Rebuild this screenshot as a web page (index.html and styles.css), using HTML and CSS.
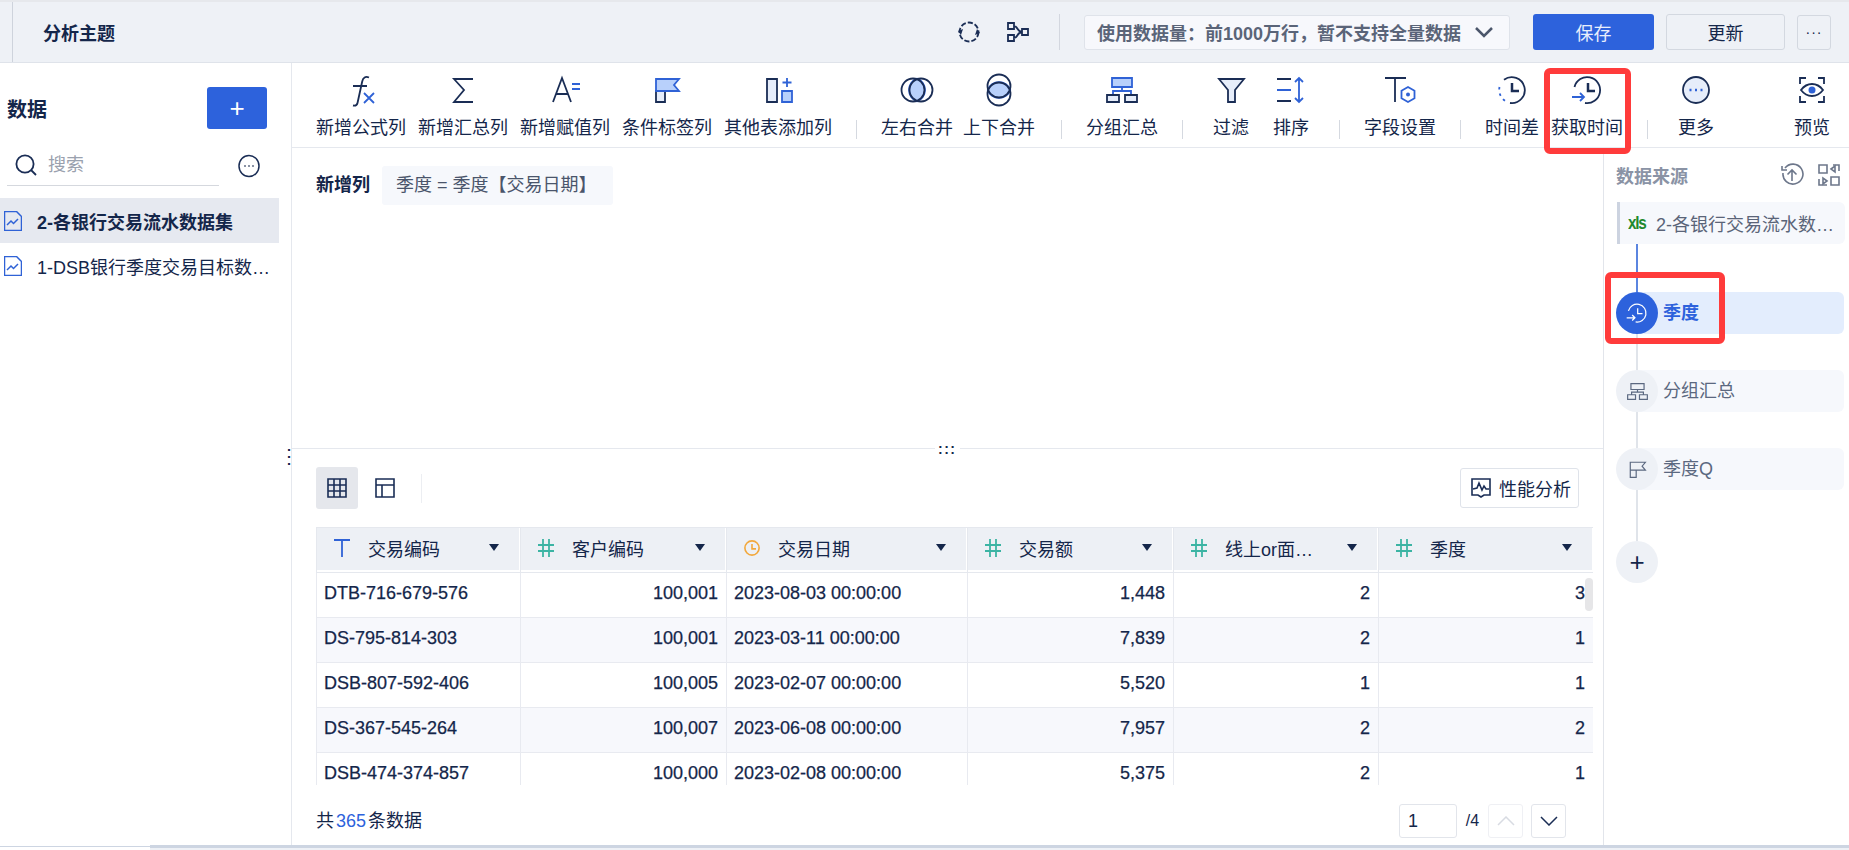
FILE: index.html
```html
<!DOCTYPE html>
<html lang="zh-CN">
<head>
<meta charset="utf-8">
<title>分析主题</title>
<link rel="stylesheet" href="styles.css">
</head>
<body>
<div class="app">
  <header class="topbar">
    <h1 class="title">分析主题</h1>
    <svg class="top-icon" width="24" height="24" viewBox="0 0 24 24"><circle class="nv ring" cx="12" cy="12" r="9.500"/><path class="nvf" d="M20 9l3 4-5 2zM4 15l-3-4 5-2z"/></svg>
    <svg class="top-icon lineage" width="24" height="24" viewBox="0 0 24 24"><path class="nv" d="M3 3h6v6H3zM3 15h6v6H3zM17 9h6v6h-6zM9 6c4 0 3 6 8 6M9 18c4 0 3-6 8-6"/></svg>
    <span class="top-sep"></span>
    <div class="limit">
      <span>使用数据量：前1000万行，暂不支持全量数据</span>
      <svg width="20" height="12" viewBox="0 0 20 12"><path class="chev" d="M2 2l8 8 8-8"/></svg>
    </div>
    <button class="btn btn-save">保存</button>
    <button class="btn btn-update">更新</button>
    <button class="btn btn-more">···</button>
  </header>

  <div class="main">
    <aside class="sidebar">
      <div class="side-head">
        <h2 class="side-title">数据</h2>
        <button class="add-btn">+</button>
      </div>
      <div class="side-search">
        <div class="search-box">
          <svg width="24" height="24" viewBox="0 0 24 24"><circle class="nv" cx="11" cy="11" r="8.600"/><path class="nv" d="M17 17l5 5"/></svg>
          <span class="search-text">搜索</span>
        </div>
        <svg class="search-more" width="22" height="24" viewBox="0 0 22 24"><ellipse class="nv thin" cx="11" cy="12" rx="10" ry="10.500"/><path class="dots" d="M6.500 12h1M10.500 12h1M14.500 12h1"/></svg>
      </div>
      <ul class="ds-list">
        <li class="ds-item ds-active">
          <svg width="18" height="20" viewBox="0 0 18 20"><path class="bl thin" d="M.5.500h12l5 5v14H.5z"/><path class="bl thin" d="M3 14l4-4 2.500 2.500L14 8"/></svg>
          <span class="ds-name">2-各银行交易流水数据集</span>
        </li>
        <li class="ds-item">
          <svg width="18" height="20" viewBox="0 0 18 20"><path class="bl thin" d="M.5.500h12l5 5v14H.5z"/><path class="bl thin" d="M3 14l4-4 2.500 2.500L14 8"/></svg>
          <span class="ds-name">1-DSB银行季度交易目标数…</span>
        </li>
      </ul>
      <span class="side-handle">⋮</span>
    </aside>

    <div class="content">
      <nav class="toolbar">
        <div class="tool"><svg viewBox="0 0 32 32"><path class="nv" d="M24 3.500c-3.500-1.500-6 0-6.800 4L12.500 29c-.6 2.500-2 3-4.500 2.500M8 12h14"/><path class="bl" d="M19 19l10 10M29 19L19 29"/></svg><span>新增公式列</span></div>
        <div class="tool"><svg viewBox="0 0 32 32"><path class="nv" d="M26 5H7l10 11L7 28h19"/></svg><span>新增汇总列</span></div>
        <div class="tool"><svg viewBox="0 0 32 32"><path class="nv" d="M4 28l9-24 9 24M7 20h12"/><path class="bl" d="M23 10h8M23 15h8"/></svg><span>新增赋值列</span></div>
        <div class="tool"><svg viewBox="0 0 32 32"><path class="pale nv" d="M5 17h9v11H5z"/><path class="mid bl" d="M5 5h23l-5 6 5 6H5z"/></svg><span>条件标签列</span></div>
        <div class="tool"><svg viewBox="0 0 32 32"><path class="pale nv" d="M5 5h10v23H5z"/><path class="bl" d="M25 4v9M20.500 8.500h9"/><path class="mid bl" d="M20 17h10v11H20z"/></svg><span>其他表添加列</span></div>
        <span class="tool-sep"></span>
        <div class="tool"><svg viewBox="0 0 32 32"><path class="mid bl" d="M16 4.700a12 12 0 0 1 0 22.600 12 12 0 0 1 0-22.600z"/><circle class="nv" cx="12" cy="16" r="11.500"/><circle class="nv" cx="20" cy="16" r="11.500"/></svg><span>左右合并</span></div>
        <div class="tool tool-nudge"><svg viewBox="0 0 32 32"><path class="mid bl" d="M4.700 16a12 12 0 0 1 22.600 0 12 12 0 0 1-22.600 0z"/><circle class="nv" cx="16" cy="12" r="11.500"/><circle class="nv" cx="16" cy="20" r="11.500"/></svg><span>上下合并</span></div>
        <span class="tool-sep"></span>
        <div class="tool"><svg viewBox="0 0 32 32"><path class="mid bl" d="M6 4h20v9H6z"/><path class="bl" d="M16 13v4M7 21v-4h18v4"/><path class="pale nv" d="M1 21h12v7H1zM19 21h12v7H19z"/></svg><span>分组汇总</span></div>
        <span class="tool-sep"></span>
        <div class="tool tool-short"><svg viewBox="0 0 32 32"><path class="pale nv" d="M4 5h25L20 16v12h-7V16z"/></svg><span>过滤</span></div>
        <div class="tool tool-short"><svg viewBox="0 0 32 32"><path class="nv" d="M2 5h14M2 27h14"/><path class="bl" d="M2 16h14M24 4v24M20 8l4-4 4 4M20 24l4 4 4-4"/></svg><span>排序</span></div>
        <span class="tool-sep"></span>
        <div class="tool"><svg viewBox="0 0 32 32"><path class="nv" d="M1 4h21M11 4v24"/><path class="bl" d="M24 13l6.500 3.700v7.600L24 28l-6.500-3.700v-7.600z"/><circle class="blf" cx="24" cy="20.500" r="2"/></svg><span>字段设置</span></div>
        <span class="tool-sep"></span>
        <div class="tool"><svg viewBox="0 0 32 32"><path class="nv" d="M8 5.700A13 13 0 1 1 14 29"/><path class="bl dotted" d="M3.500 13a13 13 0 0 0 7 14.500"/><path class="nv thick" d="M16 9v8h7"/></svg><span>时间差</span></div>
        <div class="tool"><svg viewBox="0 0 32 32"><path class="nv" d="M3.500 13A13 13 0 1 1 14 29"/><path class="nv thick" d="M17 9v8h7"/><path class="bl" d="M1 23h12M9 19l4 4-4 4"/></svg><span>获取时间</span></div>
        <span class="tool-sep"></span>
        <div class="tool tool-short"><svg viewBox="0 0 32 32"><circle class="pale nv" cx="16" cy="16" r="13"/><path class="dots-bl" d="M9.500 16h2M15 16h2M20.500 16h2"/></svg><span>更多</span></div>
        <div class="tool tool-short tool-end"><svg viewBox="0 0 32 32"><path class="nv" d="M4 10V4h6M22 4h6v6M28 22v6h-6M10 28H4v-6"/><path class="nv" d="M5 16c6-8 16-8 22 0-6 8-16 8-22 0z"/><circle class="blf" cx="16" cy="16" r="3.500"/></svg><span>预览</span></div>
      </nav>

      <div class="work">
        <section class="center">
          <div class="expr">
            <strong class="expr-label">新增列</strong>
            <span class="expr-chip">季度 = 季度【交易日期】</span>
            <span class="split-handle">:::</span>
          </div>

          <div class="preview">
            <div class="view-row">
              <button class="view-btn view-active"><svg width="20" height="20" viewBox="0 0 20 20"><path class="nv thin2" d="M1 1h18v18H1zM7 1v18M13 1v18M1 7h18M1 13h18"/></svg></button>
              <button class="view-btn"><svg width="20" height="20" viewBox="0 0 20 20"><path class="nv thin2" d="M1 1h18v18H1zM1 7h18M7 7v12"/></svg></button>
              <span class="view-sep"></span>
              <button class="perf-btn"><svg width="20" height="20" viewBox="0 0 20 20"><path class="nv thin2" d="M7 17H1V1h18v16h-6l-3 2z"/><path class="nv thin2" d="M2 11l4-1 2-5 3 7 2-4 2 3h3"/></svg><span>性能分析</span></button>
            </div>

            <div class="table-wrap">
              <table class="grid">
                <colgroup><col class="c1"><col class="c2"><col class="c3"><col class="c4"><col class="c5"><col class="c6"></colgroup>
                <thead>
                  <tr>
                    <th><div class="th-in"><svg class="ty" viewBox="0 0 16 18"><path class="bl" d="M0 1h16M8 1v17"/></svg><span class="th-name">交易编码</span><i class="caret"></i></div></th>
                    <th><div class="th-in"><svg class="ty" viewBox="0 0 16 18"><path class="teal" d="M0 6h16M0 12h16M5 0v18M11 0v18"/></svg><span class="th-name">客户编码</span><i class="caret"></i></div></th>
                    <th><div class="th-in"><svg class="ty" viewBox="0 0 18 18"><circle class="orange" cx="9" cy="9" r="8"/><path class="orange" d="M9 4.500V10h4.500"/></svg><span class="th-name">交易日期</span><i class="caret"></i></div></th>
                    <th><div class="th-in"><svg class="ty" viewBox="0 0 16 18"><path class="teal" d="M0 6h16M0 12h16M5 0v18M11 0v18"/></svg><span class="th-name">交易额</span><i class="caret"></i></div></th>
                    <th><div class="th-in"><svg class="ty" viewBox="0 0 16 18"><path class="teal" d="M0 6h16M0 12h16M5 0v18M11 0v18"/></svg><span class="th-name">线上or面…</span><i class="caret"></i></div></th>
                    <th><div class="th-in"><svg class="ty" viewBox="0 0 16 18"><path class="teal" d="M0 6h16M0 12h16M5 0v18M11 0v18"/></svg><span class="th-name">季度</span><i class="caret"></i></div></th>
                  </tr>
                </thead>
                <tbody>
                  <tr><td>DTB-716-679-576</td><td class="num">100,001</td><td>2023-08-03 00:00:00</td><td class="num">1,448</td><td class="num">2</td><td class="num">3</td></tr>
                  <tr><td>DS-795-814-303</td><td class="num">100,001</td><td>2023-03-11 00:00:00</td><td class="num">7,839</td><td class="num">2</td><td class="num">1</td></tr>
                  <tr><td>DSB-807-592-406</td><td class="num">100,005</td><td>2023-02-07 00:00:00</td><td class="num">5,520</td><td class="num">1</td><td class="num">1</td></tr>
                  <tr><td>DS-367-545-264</td><td class="num">100,007</td><td>2023-06-08 00:00:00</td><td class="num">7,957</td><td class="num">2</td><td class="num">2</td></tr>
                  <tr><td>DSB-474-374-857</td><td class="num">100,000</td><td>2023-02-08 00:00:00</td><td class="num">5,375</td><td class="num">2</td><td class="num">1</td></tr>
                </tbody>
              </table>
              <span class="scroll-thumb"></span>
            </div>

            <div class="foot">
              <span class="count">共<b>365</b>条数据</span>
              <div class="pager">
                <span class="page-input">1</span>
                <span class="page-total">/4</span>
                <button class="page-btn page-off"><svg width="18" height="10" viewBox="0 0 18 10"><path class="off" d="M1 9l8-8 8 8"/></svg></button>
                <button class="page-btn"><svg width="18" height="10" viewBox="0 0 18 10"><path class="nv thin" d="M1 1l8 8 8-8"/></svg></button>
              </div>
            </div>
          </div>
        </section>

        <aside class="flow">
          <div class="flow-head">
            <span>数据来源</span>
            <div class="flow-tools">
              <svg width="24" height="24" viewBox="0 0 24 24"><path class="gr" d="M5 5a10 10 0 1 1-2 5"/><path class="gr" d="M2 3v4h5M12 18V7M7.500 11.500L12 7l4.500 4.500"/></svg>
              <svg width="24" height="24" viewBox="0 0 24 24"><path class="gr" d="M2 2h8v8H2zM14 14h8v8h-8zM2 16v6h8M22 8V2h-6"/><path class="gr" d="M14 6l4-3v6zM10 18l-4-3v6z"/></svg>
            </div>
          </div>
          <div class="source">
            <span class="xls">xls</span>
            <span class="source-name">2-各银行交易流水数…</span>
          </div>
          <span class="link link-on link-a"></span>
          <div class="node node-on">
            <span class="dot"><svg width="22" height="22" viewBox="0 0 32 32"><path class="wh" d="M3.500 13A13 13 0 1 1 14 29M17 9v8h7M1 23h12M9 19l4 4-4 4"/></svg></span>
            <span class="node-label">季度</span>
          </div>
          <span class="link link-b"></span>
          <div class="node">
            <span class="dot"><svg width="21" height="21" viewBox="0 0 32 32"><path class="sl" d="M6 4h20v9H6zM16 13v4M7 21v-4h18v4M1 21h12v7H1zM19 21h12v7H19z"/></svg></span>
            <span class="node-label">分组汇总</span>
          </div>
          <span class="link link-b"></span>
          <div class="node">
            <span class="dot"><svg width="21" height="21" viewBox="0 0 32 32"><path class="sl" d="M5 17h9v11H5zM5 5h23l-5 6 5 6H5z"/></svg></span>
            <span class="node-label">季度Q</span>
          </div>
          <span class="link link-c"></span>
          <div class="node"><span class="dot dot-add">+</span></div>
        </aside>
      </div>
    </div>
  </div>

  <footer class="strip"><span class="strip-left"></span><span class="strip-right"></span></footer>

  <span class="mark mark-tool"></span>
  <span class="mark mark-node"></span>
</div>
</body>
</html>
```

FILE: styles.css
```css
* { box-sizing: border-box; }
html, body { margin: 0; height: 100%; background: #fff; }
body {
  overflow: hidden;
  font-family: "Liberation Sans", "Noto Sans CJK SC", sans-serif;
  font-size: 18px;
  color: #14264a;
}
button { font: inherit; color: inherit; cursor: pointer; }
h1, h2, ul { margin: 0; padding: 0; }
li { list-style: none; }

.app { position: relative; width: 1849px; height: 850px; display: flex; flex-direction: column; }

/* svg strokes */
svg path, svg circle, svg ellipse { fill: none; stroke-width: 1.800; }
.nv { stroke: #1a2d55; }
svg .nvf { fill: #1a2d55; stroke: none; }
.bl { stroke: #2f62d6; }
svg .blf { fill: #2f62d6; stroke: none; }
svg .pale { fill: #e6edfa; }
svg .mid { fill: #b8d0fb; }
svg .thin { stroke-width: 1.500; }
svg .thin2 { stroke-width: 1.600; }
svg .thick { stroke-width: 2.500; }
.dotted { stroke-dasharray: 2.500 4; }
.ring { stroke-dasharray: 5.200 2; }
svg .dots { stroke: #14264a; stroke-width: 2; }
svg .dots-bl { stroke: #2f62d6; stroke-width: 2.500; }
svg .chev { stroke: #4b566b; stroke-width: 2.500; }
.teal { stroke: #3cb4a4; }
.orange { stroke: #f2a83c; }
svg .gr { stroke: #6d778b; stroke-width: 1.600; }
.wh { stroke: #fff; }
.sl { stroke: #5b6880; }
svg .off { stroke: #d8dbe2; stroke-width: 1.500; }

/* top bar */
.topbar {
  height: 63px;
  flex: none;
  display: flex;
  align-items: center;
  background: #eef1f6;
  border-top: 2px solid #e6e8ec;
  border-bottom: 1px solid #dfe3ea;
  padding-right: 18px;
  position: relative;
}
.topbar::before { content: ""; position: absolute; left: 12px; top: 0; bottom: 0; width: 1px; background: #ced3dc; }
.title { font-size: 18px; font-weight: 700; margin-left: 43px; margin-right: auto; }
.top-icon { flex: none; }
.lineage { margin-left: 24px; }
.top-sep { width: 1px; height: 36px; background: #d3d7df; margin: 0 24px 0 30px; }
.limit {
  width: 426px;
  height: 35px;
  display: flex;
  align-items: center;
  justify-content: space-between;
  padding: 0 15px 0 12px;
  background: #f7f8fc;
  border: 1px solid #dfe3ea;
  border-radius: 3px;
  color: #5a6478;
  font-weight: 700;
}
.btn { height: 36px; border-radius: 3px; margin-left: 12px; padding: 0; }
.btn-save { width: 121px; margin-left: 23px; background: #2d62dc; border: 0; color: #e9effc; }
.btn-update { width: 119px; background: #eef1f6; border: 1px solid #d3d8e0; }
.btn-more { width: 34px; height: 35px; background: #eef1f6; border: 1px solid #d3d8e0; font-size: 14px; letter-spacing: 1px; }

.main { height: 782px; flex: none; display: flex; }

/* sidebar */
.sidebar { width: 292px; flex: none; border-right: 1px solid #e5e8ee; position: relative; }
.side-head { display: flex; justify-content: space-between; align-items: center; padding: 24px 24px 0 7px; }
.side-title { font-size: 20px; font-weight: 700; }
.add-btn { width: 60px; height: 42px; border: 0; border-radius: 3px; background: #2d62dc; color: #fff; font-size: 26px; line-height: 42px; padding: 0; font-weight: 300; }
.side-search { display: flex; align-items: center; margin-top: 24px; height: 33px; padding-left: 7px; }
.search-box { width: 212px; height: 33px; display: flex; align-items: flex-start; gap: 10px; padding-left: 7px; border-bottom: 1px solid #d5d8de; }
.search-text { color: #9aa1ae; line-height: 24px; }
.search-more { margin-left: 19px; margin-top: -8px; }
.ds-list { margin-top: 12px; width: 279px; }
.ds-item { height: 45px; display: flex; align-items: center; gap: 15px; padding: 0 0 0 4px; }
.ds-item svg { flex: none; }
.ds-active { background: #e6e9f0; font-weight: 700; }
.ds-name { white-space: nowrap; }
.side-handle { position: absolute; right: 0; top: 379px; width: 12px; text-align: center; font-size: 20px; line-height: 28px; color: #14264a; }

/* toolbar */
.content { flex: 1; min-width: 0; display: flex; flex-direction: column; }
.toolbar {
  height: 85px;
  flex: none;
  display: flex;
  gap: 12px;
  padding: 11px 13px 0 24px;
  border-bottom: 1px solid #e5e8ee;
}
.tool { flex: none; display: flex; flex-direction: column; align-items: center; }
.tool svg { width: 32px; height: 32px; overflow: visible; }
.tool span { margin-top: 10px; line-height: 24px; white-space: nowrap; }
.tool-short { padding: 0 6px; }
.tool-end { margin-left: auto; }
.tool-nudge { transform: translateX(-2px); }
.tool-sep { width: 1px; height: 19px; background: #d5d9e0; margin: 46px 12px 0; flex: none; }

/* work area */
.work { flex: 1; min-height: 0; display: flex; }
.center { width: 1312px; flex: none; border-right: 1px solid #e2e5eb; display: flex; flex-direction: column; }
.expr { height: 301px; flex: none; padding: 18px 0 0 24px; display: flex; align-items: flex-start; gap: 12px; border-bottom: 1px solid #e5e8ee; position: relative; }
.expr-label { line-height: 39px; font-weight: 700; }
.expr-chip { height: 39px; line-height: 39px; width: 231px; padding-left: 14px; background: #f6f8fc; color: #4a556b; border-radius: 3px; white-space: nowrap; }
.split-handle { position: absolute; left: 643px; bottom: -8px; font-size: 14px; line-height: 14px; letter-spacing: 1.500px; background: #fff; padding: 0 3px; color: #14264a; font-weight: 700; }

.preview { flex: 1; min-height: 0; padding: 18px 10px 0 24px; display: flex; flex-direction: column; }
.view-row { height: 42px; flex: none; display: flex; align-items: center; gap: 6px; }
.view-btn { width: 42px; height: 42px; border: 0; background: transparent; border-radius: 3px; padding: 0; display: flex; align-items: center; justify-content: center; }
.view-active { background: #e5e7ec; }
.view-sep { width: 1px; height: 29px; background: #eceef2; margin-left: 9px; }
.perf-btn { margin-left: auto; margin-right: 14px; width: 119px; height: 40px; background: #fff; border: 1px solid #dfe3ea; border-radius: 3px; display: flex; align-items: center; gap: 8px; padding: 0 0 0 10px; }

.table-wrap { margin-top: 18px; height: 258px; flex: none; overflow: hidden; position: relative; }
.grid { width: 1277px; table-layout: fixed; border-collapse: collapse; }
.c1 { width: 204px; } .c2 { width: 206px; } .c3 { width: 241px; } .c4 { width: 206px; } .c5 { width: 205px; } .c6 { width: 215px; }
.grid th { height: 45px; padding: 0; background: #edf0f5; border: 1px solid #e5e8ee; font-weight: 400; box-shadow: inset -1px -2px 0 #fff; }
.grid td { height: 45px; padding: 0 8px 3px 7px; border: 1px solid #e8eaf0; white-space: nowrap; -webkit-text-stroke: .25px #14264a; }
.grid tbody tr:nth-child(even) td { background: #f7f8fc; }
.num { text-align: right; }
.th-in { display: flex; align-items: center; padding: 0 21px 5px 17px; gap: 18px; text-align: left; }
.ty { width: 16px; height: 18px; flex: none; overflow: visible; }
.th-name { flex: 1; white-space: nowrap; }
.caret { width: 0; height: 0; border-left: 5.500px solid transparent; border-right: 5.500px solid transparent; border-top: 7px solid #14264a; flex: none; }
.scroll-thumb { position: absolute; left: 1269px; top: 51px; width: 8px; height: 33px; background: #e6e6e8; border-radius: 4px; }

.foot { flex: 1; display: flex; justify-content: space-between; align-items: flex-start; padding: 19px 27px 0 0; }
.count { line-height: 34px; }
.count b { color: #2d62dc; font-weight: 400; margin: 0 2px; }
.pager { display: flex; align-items: center; height: 34px; }
.page-input { width: 58px; height: 34px; border: 1px solid #e2e5eb; border-radius: 3px; line-height: 32px; padding-left: 8px; }
.page-total { width: 31px; text-align: center; font-size: 16px; }
.page-btn { width: 35px; height: 34px; margin-right: 8px; background: #fff; border: 1px solid #e2e5eb; border-radius: 3px; padding: 0; display: flex; align-items: center; justify-content: center; }
.page-btn:last-child { margin-right: 0; }
.page-off { border-color: #eff0f4; }

/* data flow */
.flow { flex: 1; padding: 12px 4px 0 12px; display: flex; flex-direction: column; align-items: flex-start; }
.flow-head { width: 100%; height: 30px; display: flex; align-items: center; justify-content: space-between; margin-bottom: 12px; color: #8a93a5; font-weight: 700; padding-right: 4px; }
.flow-tools { display: flex; gap: 13px; }
.source { width: 228px; margin-left: 1px; height: 42px; flex: none; display: flex; align-items: center; gap: 6px; padding: 0 0 0 8px; background: #f6f8fc; border-left: 3px solid #ccd3e0; border-radius: 0 6px 6px 0; color: #5a6478; }
.xls { width: 22px; flex: none; color: #1f8a2e; font-weight: 700; letter-spacing: -1.500px; transform: scaleX(.85); transform-origin: left center; white-space: nowrap; }
.source-name { white-space: nowrap; }
.link { display: block; width: 2px; margin-left: 20px; background: #e0e4ea; flex: none; }
.link-on { background: #5b85e0; }
.link-a { height: 48px; }
.link-b { height: 36px; }
.link-c { height: 51px; }
.node { display: flex; align-items: center; width: 228px; height: 42px; flex: none; }
.dot { position: relative; z-index: 1; width: 42px; height: 42px; flex: none; border-radius: 50%; background: #eef1f6; display: flex; align-items: center; justify-content: center; }
.dot-add { font-size: 26px; font-weight: 300; }
.node-label { flex: 1; height: 42px; line-height: 42px; margin-left: -21px; padding-left: 26px; background: #f6f8fc; color: #5b6880; border-radius: 0 6px 6px 0; }
.node-on .dot { background: #2d62dc; }
.node-on .node-label { background: #e3edfd; color: #2d62dc; font-weight: 700; }

/* bottom strip */
.strip { flex: 1; display: flex; }
.strip-left { width: 150px; border-top: 1px solid #cdd5e2; margin-top: 1px; }
.strip-right { flex: 1; background: #eef1f6; border-top: 3px solid #cdd5e2; }

/* annotations */
.mark { position: absolute; border: 6px solid #ff3b3b; border-radius: 6px; pointer-events: none; }
.mark-tool { left: 1544px; top: 68px; width: 87px; height: 86px; }
.mark-node { left: 1605px; top: 272px; width: 120px; height: 72px; }
```
